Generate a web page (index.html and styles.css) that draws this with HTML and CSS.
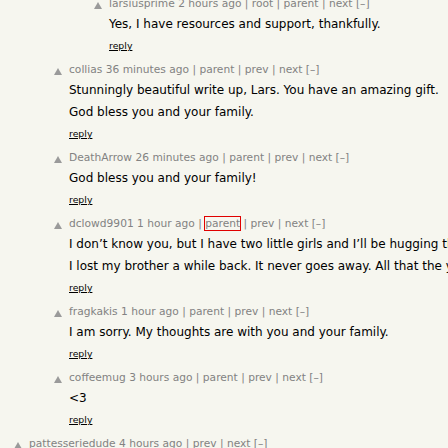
FILE: index.html
```html
<!DOCTYPE html>
<html>
<head>
<meta charset="utf-8">
<link rel="stylesheet" href="styles.css">
</head>
<body>
<div class="thread">
  <div class="comment lvl2">
    <span class="arrow"></span>
    <div class="body">
      <div class="head"><a>larsiusprime</a> <a>2 hours ago</a> | <a>root</a> | <a>parent</a> | <a>next</a> [–]</div>
      <p class="text">Yes, I have resources and support, thankfully.</p>
      <div class="reply"><a>reply</a></div>
    </div>
  </div>
  <div class="comment lvl1">
    <span class="arrow"></span>
    <div class="body">
      <div class="head"><a>collias</a> <a>36 minutes ago</a> | <a>parent</a> | <a>prev</a> | <a>next</a> [–]</div>
      <p class="text">Stunningly beautiful write up, Lars. You have an amazing gift.</p>
      <p class="text">God bless you and your family.</p>
      <div class="reply"><a>reply</a></div>
    </div>
  </div>
  <div class="comment lvl1">
    <span class="arrow"></span>
    <div class="body">
      <div class="head"><a>DeathArrow</a> <a>26 minutes ago</a> | <a>parent</a> | <a>prev</a> | <a>next</a> [–]</div>
      <p class="text">God bless you and your family!</p>
      <div class="reply"><a>reply</a></div>
    </div>
  </div>
  <div class="comment lvl1">
    <span class="arrow"></span>
    <div class="body">
      <div class="head"><a>dclowd9901</a> <a>1 hour ago</a> | <a class="focus">parent</a> | <a>prev</a> | <a>next</a> [–]</div>
      <p class="text">I don’t know you, but I have two little girls and I’ll be hugging them a little tighter tonight.</p>
      <p class="text">I lost my brother a while back. It never goes away. All that the years do is make it a little easier.</p>
      <div class="reply"><a>reply</a></div>
    </div>
  </div>
  <div class="comment lvl1">
    <span class="arrow"></span>
    <div class="body">
      <div class="head"><a>fragkakis</a> <a>1 hour ago</a> | <a>parent</a> | <a>prev</a> | <a>next</a> [–]</div>
      <p class="text">I am sorry. My thoughts are with you and your family.</p>
      <div class="reply"><a>reply</a></div>
    </div>
  </div>
  <div class="comment lvl1">
    <span class="arrow"></span>
    <div class="body">
      <div class="head"><a>coffeemug</a> <a>3 hours ago</a> | <a>parent</a> | <a>prev</a> | <a>next</a> [–]</div>
      <p class="text">&lt;3</p>
      <div class="reply"><a>reply</a></div>
    </div>
  </div>
  <div class="comment lvl0">
    <span class="arrow"></span>
    <div class="body">
      <div class="head"><a>pattesseriedude</a> <a>4 hours ago</a> | <a>prev</a> | <a>next</a> [–]</div>
      <p class="text">Thank you for sharing.</p>
      <div class="reply"><a>reply</a></div>
    </div>
  </div>
</div>
</body>
</html>
```
FILE: styles.css
```css
html, body {
  margin: 0;
  padding: 0;
  background: #f6f6ef;
  overflow: hidden;
  width: 448px;
  height: 448px;
}
body {
  font-family: "DejaVu Sans", Verdana, sans-serif;
  color: #000;
}
.thread {
  margin-top: -5px;
}
.comment {
  display: flex;
  align-items: flex-start;
  margin-bottom: 4px;
  white-space: nowrap;
}
.lvl0 { padding-left: 14px; }
.lvl1 { padding-left: 54px; }
.lvl2 { padding-left: 94px; }
.arrow {
  flex: none;
  width: 0;
  height: 0;
  margin-top: 7px;
  margin-right: 7px;
  border-left: 4px solid transparent;
  border-right: 4px solid transparent;
  border-bottom: 7px solid #9a9a9a;
}
.head {
  height: 18px;
  line-height: 18px;
  font-size: 10.67px;
  color: #828282;
}
.head a { color: #828282; text-decoration: none; }
.head a.focus { outline: 1px solid #e00000; outline-offset: 0; }
.text {
  margin: 0;
  height: 22px;
  line-height: 22px;
  font-size: 12px;
}
.reply {
  height: 22px;
  line-height: 22px;
  font-size: 9.33px;
}
.reply a { color: #000; text-decoration: underline; }
```
